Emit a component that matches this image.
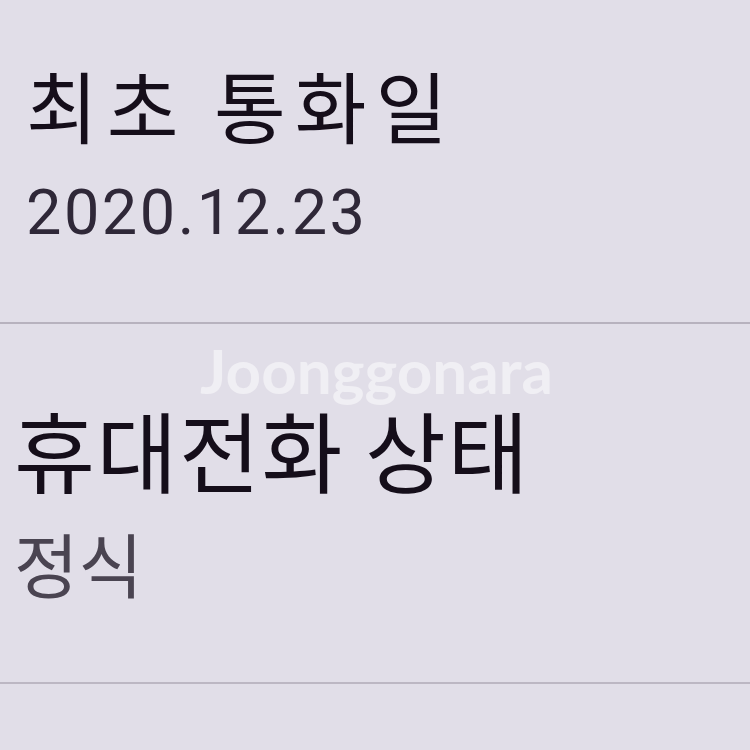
export default function App() {
  const kr = { fontFamily: '"Noto Sans CJK KR", "Noto Sans", sans-serif' };
  const num = { fontFamily: 'Roboto, "Noto Sans CJK KR", sans-serif' };
  return (
    <div className="w-[750px] h-[750px] overflow-hidden bg-[#e1dee8] relative">
      <div className="pl-[26px] pt-[49px] h-[322px]">
        <div className="text-[78px] leading-[110px] tracking-[9px] text-[#150e1a]" style={kr}>최초 통화일</div>
        <div className="text-[63px] leading-[80px] tracking-[2.5px] text-[#2f2838] mt-[14px]" style={num}>2020.12.23</div>
      </div>
      <div className="h-[2px] bg-[#b7b2be]" />
      <div className="pl-[14px] pt-[74px] h-[358px] relative">
        <div className="text-[88px] leading-[100px] tracking-[1.5px] text-[#150e1a]" style={kr}>휴대전화 상태</div>
        <div className="text-[70px] leading-[84px] text-[#4a4451] mt-[23px]" style={kr}>정식</div>
      </div>
      <div className="h-[2px] bg-[#bcb7c3]" />
      <div className="absolute left-[200px] top-[344px] text-[62px] leading-[52px] font-bold text-white/50" style={{ fontFamily: 'Lato, "Open Sans", sans-serif' }}>Joonggonara</div>
    </div>
  );
}
